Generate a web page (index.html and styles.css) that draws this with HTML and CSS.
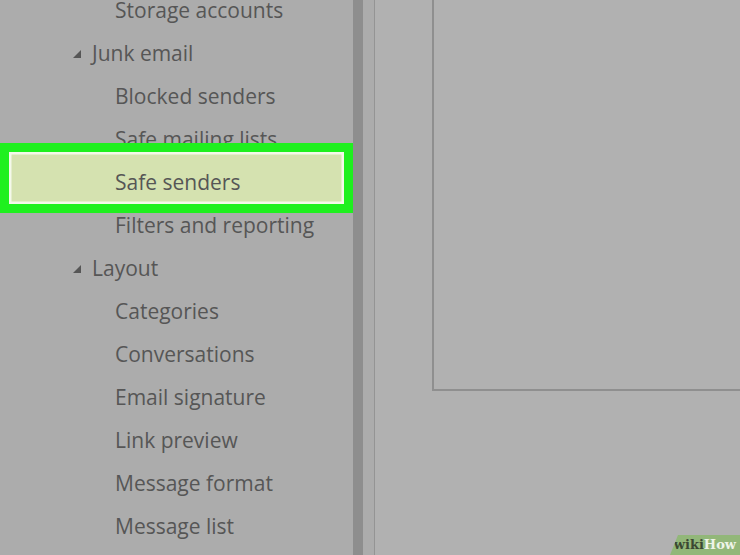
FILE: index.html
```html
<!DOCTYPE html>
<html>
<head>
<meta charset="utf-8">
<link rel="stylesheet" href="styles.css">
</head>
<body>
<div class="app">
  <nav class="sidebar">
    <ul class="tree">
      <li class="item child">Storage accounts</li>
      <li class="item parent"><span class="caret"></span>Junk email</li>
      <li class="item child">Blocked senders</li>
      <li class="item child">Safe mailing lists</li>
      <li class="item child selected">Safe senders</li>
      <li class="item child">Filters and reporting</li>
      <li class="item parent"><span class="caret"></span>Layout</li>
      <li class="item child">Categories</li>
      <li class="item child">Conversations</li>
      <li class="item child">Email signature</li>
      <li class="item child">Link preview</li>
      <li class="item child">Message format</li>
      <li class="item child">Message list</li>
    </ul>
  </nav>
  <div class="splitter"></div>
  <div class="gutter"></div>
  <main class="main">
    <div class="frame"></div>
  </main>
</div>
<div class="brand"><span class="wiki">wiki</span><span class="how">How</span></div>
</body>
</html>
```

FILE: styles.css
```css
html, body {
  margin: 0;
  padding: 0;
  width: 740px;
  height: 555px;
  overflow: hidden;
  background: #b1b1b1;
  font-family: "Open Sans", "Noto Sans", sans-serif;
}

.app {
  display: flex;
  height: 555px;
}

.sidebar {
  width: 353px;
  flex: none;
  background: #acacac;
  overflow: hidden;
}

.tree {
  list-style: none;
  margin: -12px 0 0 0;
  padding: 0;
}

.item {
  position: relative;
  z-index: 0;
  height: 43px;
  display: flex;
  align-items: center;
  font-size: 21px;
  color: #565656;
  white-space: nowrap;
}

.child {
  padding-left: 115px;
}

.parent {
  padding-left: 73px;
}

.caret {
  width: 0;
  height: 0;
  border-left: 8px solid transparent;
  border-bottom: 8px solid #565656;
  margin-right: 11px;
  margin-top: 2px;
}

.selected::before {
  content: "";
  position: absolute;
  z-index: -1;
  left: 0;
  top: -17px;
  width: 353px;
  height: 70px;
  box-sizing: border-box;
  border: 9px solid #1ff01f;
  background: #d5e2b0;
  box-shadow: inset 0 0 0 2.5px #f4f8ea;
}

.splitter {
  width: 10px;
  flex: none;
  background: #8e8e8e;
}

.gutter {
  width: 11px;
  flex: none;
  background: #acacac;
  border-right: 1px solid #949494;
}

.main {
  flex: 1;
  padding-left: 57px;
  background: #b1b1b1;
}

.frame {
  height: 391px;
  box-sizing: border-box;
  border-left: 2px solid #8f8f8f;
  border-bottom: 2px solid #8f8f8f;
}

.brand {
  position: absolute;
  right: 0;
  bottom: 0;
  width: 70px;
  height: 20px;
  background: #92b779;
  clip-path: polygon(8px 0, 100% 0, 100% 100%, 0 100%);
  font-family: "DejaVu Serif", "Liberation Serif", serif;
  font-weight: bold;
  font-size: 13px;
  line-height: 20px;
  text-align: right;
  padding-right: 4px;
  box-sizing: border-box;
}

.wiki {
  color: #3b4832;
}

.how {
  color: #eef4e8;
}
```
